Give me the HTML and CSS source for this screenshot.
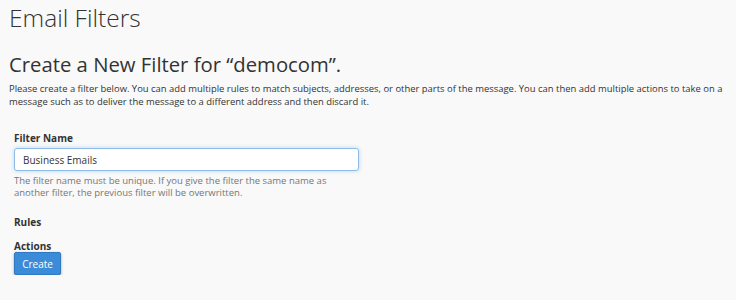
FILE: index.html
```html
<!DOCTYPE html>
<html>
<head>
<meta charset="utf-8">
<link rel="stylesheet" href="styles.css">
</head>
<body>
<div class="page">
  <h1 class="title">Email Filters</h1>
  <h2 class="subtitle">Create a New Filter for “democom”.</h2>
  <p class="intro">Please create a filter below. You can add multiple rules to match subjects, addresses, or other parts of the message. You can then add multiple actions to take on a message such as to deliver the message to a different address and then discard it.</p>
  <form class="form">
    <div class="group">
      <label class="label" for="fname">Filter Name</label>
      <input class="input" id="fname" type="text" value="Business Emails">
      <p class="help">The filter name must be unique. If you give the filter the same name as another filter, the previous filter will be overwritten.</p>
    </div>
    <div class="section-label">Rules</div>
    <div class="section-label actions">Actions</div>
    <button class="btn" type="button">Create</button>
  </form>
</div>
</body>
</html>
```
FILE: styles.css
```css
html, body {
  margin: 0;
  padding: 0;
  background: #f9f9f9;
}
body {
  font-family: "Open Sans", "Liberation Sans", sans-serif;
  color: #333;
}
.page {
  padding: 0 9px;
}
.title {
  font-size: 24.5px;
  font-weight: 300;
  line-height: 36px;
  margin: 0;
  color: #333;
}
.subtitle {
  font-size: 20.3px;
  font-weight: 400;
  line-height: 30px;
  margin: 13px 0 0 0;
  color: #333;
}
.intro {
  font-size: 9.45px;
  line-height: 13px;
  margin: 3px 0 0 0;
}
.form {
  padding: 0 5px;
  margin-top: 23px;
}
.label {
  display: block;
  font-size: 10px;
  font-weight: 700;
  line-height: 14px;
}
.input {
  display: block;
  box-sizing: border-box;
  width: 345px;
  height: 23px;
  margin-top: 3px;
  padding: 0 8px;
  border: 1px solid #8fbbe8;
  border-radius: 3px;
  background: #fff;
  box-shadow: 0 0 4px rgba(102, 175, 233, 0.45);
  font-family: "Open Sans", "Liberation Sans", sans-serif;
  font-size: 10px;
  color: #333;
  outline: none;
}
.help {
  font-size: 9.5px;
  line-height: 12px;
  color: #777;
  margin: 4px 0 0 0;
  width: 340px;
}
.section-label {
  font-size: 10px;
  font-weight: 700;
  line-height: 14px;
  margin-top: 16px;
}
.section-label.actions {
  margin-top: 10px;
}
.btn {
  display: block;
  margin-top: -1px;
  width: 47px;
  height: 23px;
  padding: 0;
  border: 1px solid #2f7ac2;
  border-radius: 2px;
  background: #3a8bd8;
  color: #fff;
  font-family: "Open Sans", "Liberation Sans", sans-serif;
  font-size: 10px;
  box-shadow: 0 1px 3px rgba(0, 0, 0, 0.35);
}
```
